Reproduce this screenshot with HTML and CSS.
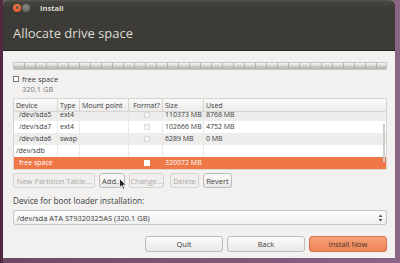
FILE: index.html
```html
<!DOCTYPE html>
<html lang="en">
  <head>
    <meta charset="UTF-8" />
    <title>Install</title>
    <link rel="stylesheet" href="styles.css">
  </head>
  <body>
    <div class="window">
      <div class="titlebar">
        <div class="top">
          <span class="wbtn close">&times;</span>
          <span class="wbtn min"></span>
          <span class="wtitle">Install</span>
        </div>
        <h1>Allocate drive space</h1>
      </div>

      <div class="content">
        <div class="diskbar"></div>
        <div class="legend">
          <span class="box"></span>
          <div>
            <div>free space</div>
            <div class="gray">320.1 GB</div>
          </div>
        </div>

        <div class="table">
          <div class="row head">
            <span class="c1">Device</span>
            <span class="c2">Type</span>
            <span class="c3">Mount point</span>
            <span class="c4">Format?</span>
            <span class="c5">Size</span>
            <span class="c6">Used</span>
          </div>
          <div class="rows">
            <div class="row part alt cut">
              <span class="c1 in">/dev/sda5</span>
              <span class="c2">ext4</span>
              <span class="c3"></span>
              <span class="c4"><i class="chk"></i></span>
              <span class="c5">110373 MB</span>
              <span class="c6">8768 MB</span>
            </div>
            <div class="row part">
              <span class="c1 in">/dev/sda7</span>
              <span class="c2">ext4</span>
              <span class="c3"></span>
              <span class="c4"><i class="chk"></i></span>
              <span class="c5">102666 MB</span>
              <span class="c6">4752 MB</span>
            </div>
            <div class="row part alt">
              <span class="c1 in">/dev/sda6</span>
              <span class="c2">swap</span>
              <span class="c3"></span>
              <span class="c4"><i class="chk"></i></span>
              <span class="c5">6289 MB</span>
              <span class="c6">0 MB</span>
            </div>
            <div class="row part">
              <span class="c1">/dev/sdb</span>
              <span class="c2"></span>
              <span class="c3"></span>
              <span class="c4"></span>
              <span class="c5"></span>
              <span class="c6"></span>
            </div>
            <div class="row part sel">
              <span class="c1 in">free space</span>
              <span class="c2"></span>
              <span class="c3"></span>
              <span class="c4"><i class="chk"></i></span>
              <span class="c5">320072 MB</span>
              <span class="c6"></span>
            </div>
            <div class="scroll"></div>
          </div>
        </div>

        <div class="tools">
          <button class="btn off w-new">New Partition Table...</button>
          <button class="btn w-add">Add...</button>
          <button class="btn off w-change">Change...</button>
          <button class="btn off w-delete">Delete</button>
          <button class="btn w-revert">Revert</button>
        </div>

        <div class="label">Device for boot loader installation:</div>
        <div class="combo">
          <span>/dev/sda ATA ST9320325AS (320.1 GB)</span>
          <svg class="arrows" width="5" height="8" viewBox="0 0 5 8">
            <path d="M0.5 3 L2.5 0.5 L4.5 3 Z M0.5 5 L2.5 7.5 L4.5 5 Z" fill="#555"/>
          </svg>
        </div>

        <div class="actions">
          <button class="btn big">Quit</button>
          <button class="btn big">Back</button>
          <button class="btn big go">Install Now</button>
        </div>
      </div>
    </div>
    <!-- mouse pointer over Add... -->
    <svg class="cursor" width="8" height="12" viewBox="0 0 8 12">
      <path d="M0.5 0.5 L0.5 9.5 L2.6 7.6 L4.2 11.2 L5.6 10.6 L4 7.1 L7 7.1 Z" fill="#222" stroke="#fff" stroke-width="0.8"/>
    </svg>
  </body>
</html>
```

FILE: styles.css
```css
* {
  margin: 0;
  padding: 0;
  box-sizing: border-box;
}
body {
  width: 400px;
  height: 263px;
  background: linear-gradient(90deg, #4f2a42 0, #4f2a42 3px, #6d4a63 3px, #8a6585 100%);
  padding: 0 5px 5px 3px;
  font-family: "Open Sans", "DejaVu Sans", sans-serif;
  font-size: 8.2px;
  color: #3c3c3c;
  position: relative;
}
.window {
  height: 258px;
  background: #f2f1f0;
  border-radius: 5px 5px 0 0;
  display: flex;
  flex-direction: column;
  overflow: hidden;
}
.titlebar {
  height: 51px;
  background: linear-gradient(#57564f 0, #45443f 2px, #3c3b37 8px, #3c3b37 100%);
  border-bottom: 1px solid #24231f;
  padding: 0 10px;
}
.top {
  display: flex;
  align-items: center;
  height: 15px;
  padding-top: 1px;
}
.wbtn {
  width: 8px;
  height: 8px;
  border-radius: 50%;
  margin-right: 1px;
  font-size: 7px;
  line-height: 8px;
  text-align: center;
  color: #3c3b37;
  font-weight: bold;
}
.close {
  background: radial-gradient(circle at 50% 35%, #f58c5c, #dd4814);
}
.min {
  background: radial-gradient(circle at 50% 35%, #8a8984, #5d5c57);
}
.wtitle {
  margin-left: 9px;
  color: #dfdbd2;
  font-weight: bold;
  font-size: 7.5px;
}
h1 {
  font-weight: normal;
  color: #dfdbd2;
  font-size: 13px;
  margin-top: 9px;
}
.content {
  flex: 1;
  padding: 11px 8px 0 10px;
  display: flex;
  flex-direction: column;
}
.diskbar {
  height: 8px;
  border: 1px solid #c9c8c5;
  background:
    repeating-linear-gradient(90deg, transparent 0, transparent 10px, #b5b4b1 10px, #b5b4b1 11px),
    linear-gradient(#f4f4f3, #dedddb 40%, #c7c6c3 60%, #b9b8b5);
}
.legend {
  display: flex;
  gap: 3px;
  margin-top: 4px;
  line-height: 10px;
  font-size: 7.5px;
}
.box {
  width: 6px;
  height: 6px;
  border: 1px solid #777;
  background: #fff;
  margin-top: 2px;
}
.gray {
  color: #7d7d7b;
}
.table {
  margin-top: 4px;
  border: 1px solid #d6d5d2;
  background: #fff;
  font-size: 7px;
}
.row {
  display: flex;
  height: 12px;
  line-height: 12px;
}
.row span {
  overflow: hidden;
  white-space: nowrap;
  padding-left: 2px;
}
.c1 { width: 44px; }
.c2 { width: 22px; }
.c3 { width: 49px; }
.c4 { width: 34px; text-align: center; }
.c5 { width: 41px; }
.c6 { flex: 1; }
.c1.in { padding-left: 5px; }
.head {
  height: 13px;
  line-height: 13px;
  background: linear-gradient(#fafaf9, #ecebe9);
  border-bottom: 1px solid #d6d5d2;
}
.head span {
  border-right: 1px solid #d6d5d2;
}
.head .c6 {
  border-right: none;
}
.rows {
  position: relative;
}
.part span {
  border-right: 1px solid #e8e8e6;
}
.part .c6 {
  border-right: none;
  padding-right: 6px;
}
.alt {
  background: #ededec;
}
.cut {
  height: 9px;
  line-height: 6px;
}
.sel {
  background: #f07746;
  color: #fff;
}
.sel span {
  border-right-color: #f07746;
}
.chk {
  display: inline-block;
  width: 6px;
  height: 6px;
  border: 1px solid #dcdcda;
  background: #f4f4f3;
  vertical-align: -0.5px;
}
.sel .chk {
  background: #fff;
  border-color: #fff;
}
.scroll {
  position: absolute;
  right: 1px;
  top: 12px;
  width: 2px;
  height: 38px;
  background: #cfcecb;
}
.tools {
  display: flex;
  margin-top: 3px;
}
.btn {
  font-family: inherit;
  font-size: 7.5px;
  color: #3c3c3c;
  height: 15px;
  padding: 0;
  text-align: center;
  border: 1px solid #bdbcb8;
  border-radius: 3px;
  background: linear-gradient(#fbfbfa, #e9e8e6);
}
.btn.off {
  color: #a9a8a5;
  border-color: #d4d3d0;
  background: #f0efee;
}
.w-new { width: 82px; }
.w-add { width: 26px; margin-left: 4px; }
.w-change { width: 35px; margin-left: 4px; }
.w-delete { width: 29px; margin-left: 6px; }
.w-revert { width: 29px; margin-left: 4px; }
.label {
  margin-top: 8px;
  line-height: 10px;
}
.combo {
  margin-top: 4px;
  height: 15px;
  border: 1px solid #c6c5c2;
  border-radius: 3px;
  background: linear-gradient(#fdfdfd, #efefee);
  display: flex;
  justify-content: space-between;
  align-items: center;
  padding: 0 3px;
  font-size: 7.5px;
}
.arrows {
  display: block;
}
.actions {
  display: flex;
  justify-content: flex-end;
  gap: 4px;
  margin-top: 11px;
}
.big {
  height: 16px;
  width: 78px;
}
.go {
  background: linear-gradient(#f6a17a, #ee8256);
  border-color: #d9714b;
  color: #4a3328;
}
.cursor {
  position: absolute;
  left: 119px;
  top: 178px;
}
```
